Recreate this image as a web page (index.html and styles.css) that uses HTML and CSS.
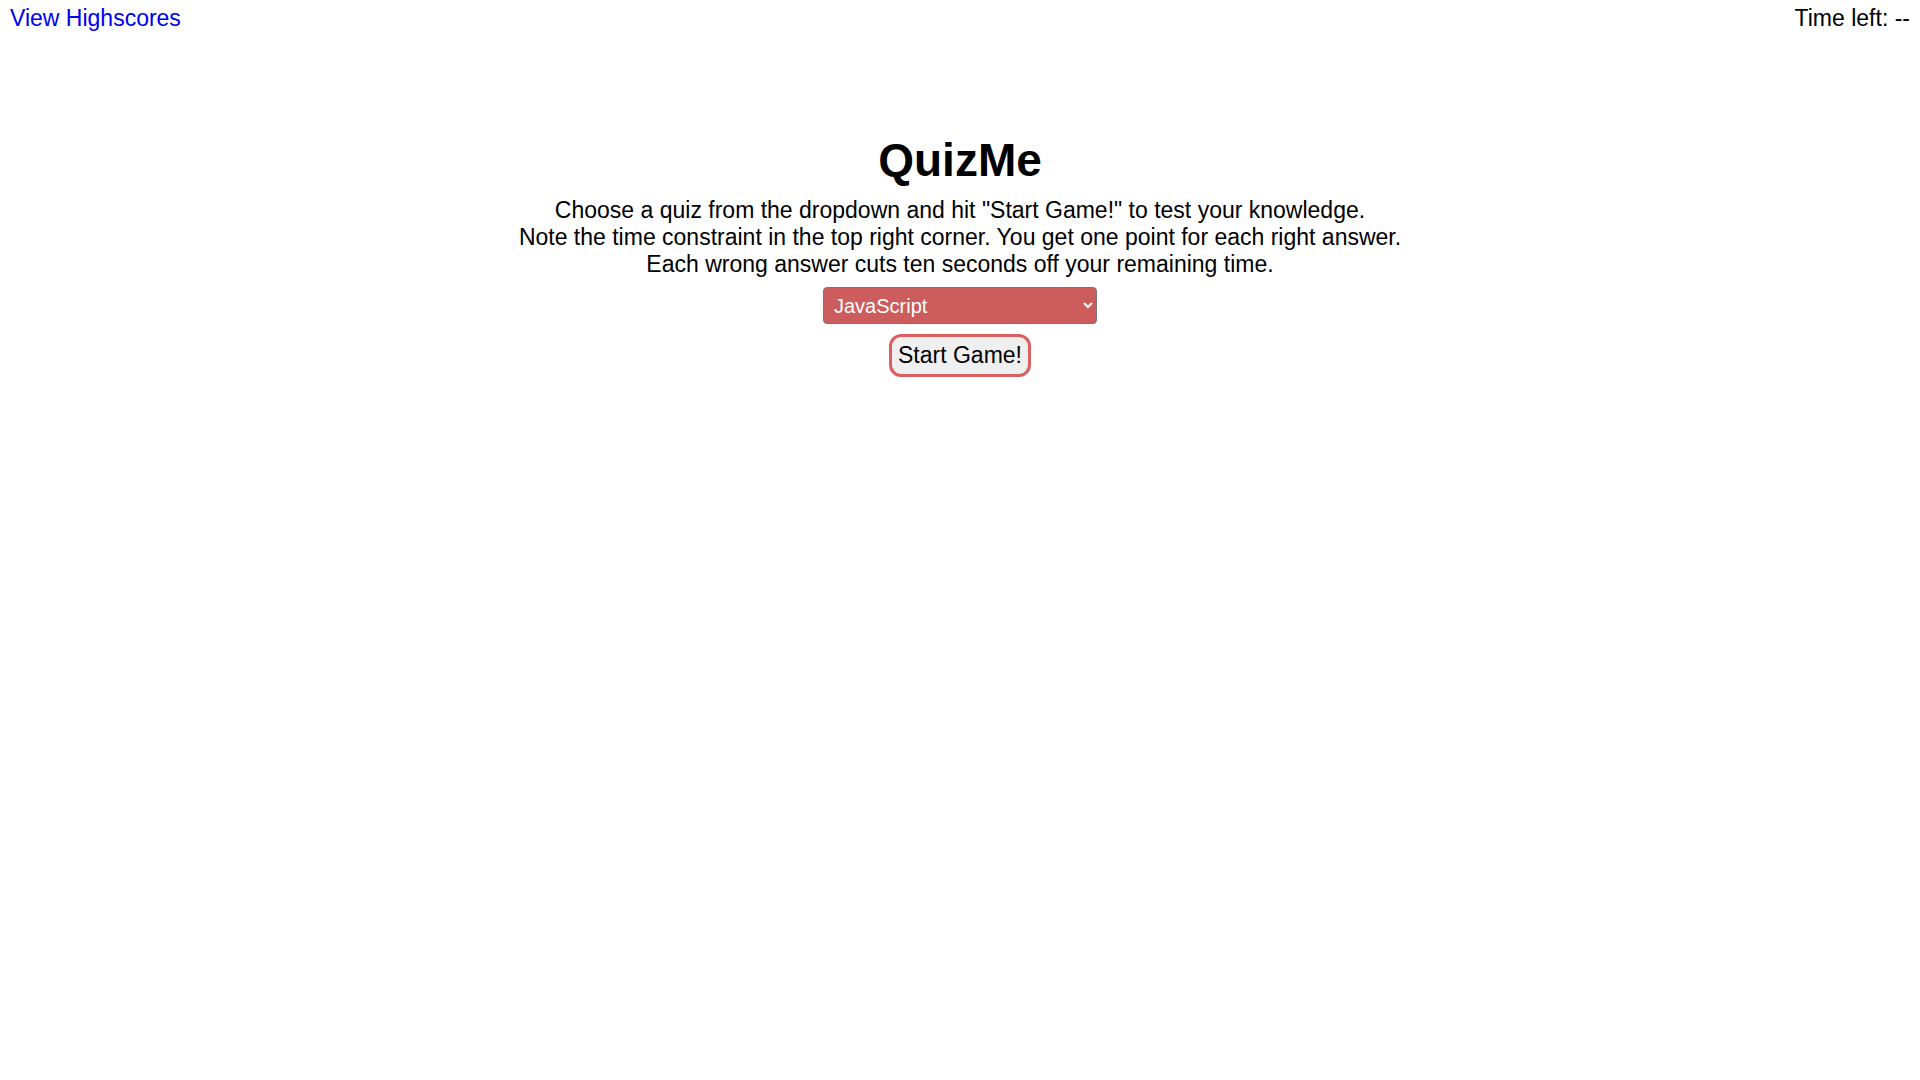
FILE: index.html
```html
<!DOCTYPE html>
<html lang="en">
<head>
<meta charset="utf-8">
<title>QuizMe</title>
<link rel="stylesheet" href="styles.css">
</head>
<body>
<header class="topbar">
  <a class="highscores" href="#">View Highscores</a>
  <div class="timer">Time left: <span>--</span></div>
</header>
<main class="intro">
  <h1 class="title">QuizMe</h1>
  <p class="desc">Choose a quiz from the dropdown and hit "Start Game!" to test your knowledge.<br>Note the time constraint in the top right corner. You get one point for each right answer.<br>Each wrong answer cuts ten seconds off your remaining time.</p>
  <select class="quiz-select">
    <option>JavaScript</option>
    <option>HTML</option>
    <option>CSS</option>
  </select>
  <button class="start-btn" type="button">Start Game!</button>
</main>
</body>
</html>
```
FILE: styles.css
```css
html, body {
  background: #ffffff;
}
body {
  margin: 5px 8px 8px 8px;
  font-family: "Liberation Sans", Arial, sans-serif;
  font-size: 23px;
  color: #000000;
}
.topbar {
  display: flex;
  justify-content: space-between;
  align-items: flex-start;
}
.highscores {
  color: #0000ee;
  text-decoration: none;
  padding-left: 2px;
}
.timer {
  padding-right: 2px;
}
.intro {
  display: flex;
  flex-direction: column;
  align-items: center;
  margin-top: 101px;
}
.title {
  font-size: 46px;
  font-weight: bold;
  margin: 0 0 10px 0;
}
.desc {
  text-align: center;
  margin: 0 0 9px 0;
  line-height: 27px;
}
.quiz-select {
  width: 274px;
  height: 37px;
  font-family: "Liberation Sans", Arial, sans-serif;
  font-size: 20px;
  color: #ffffff;
  background-color: #cd5c5c;
  border: 1px solid #767676;
  border-radius: 4px;
  padding: 0 6px;
  margin: 0 0 10px 0;
}
.start-btn {
  font-family: "Liberation Sans", Arial, sans-serif;
  font-size: 23px;
  color: #000000;
  background: #efefef;
  border: 3px solid #de5f5f;
  border-radius: 12px;
  padding: 5px 6px;
}
```
